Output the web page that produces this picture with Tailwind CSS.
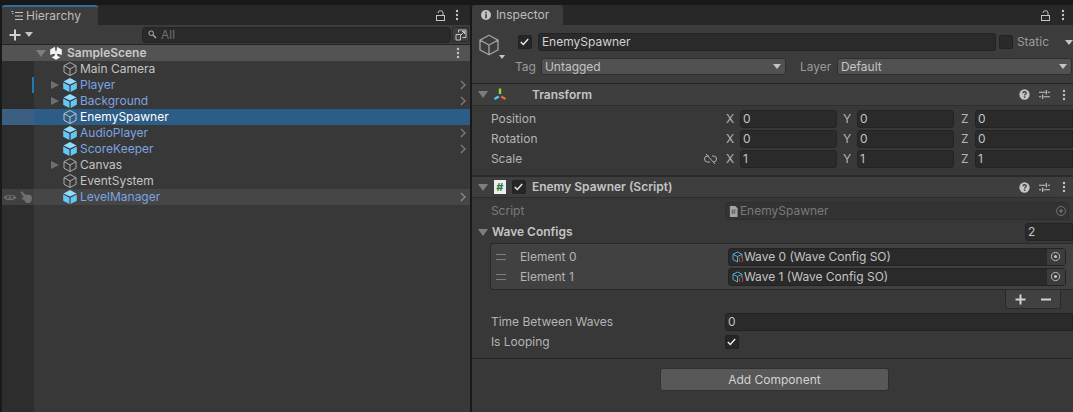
<!DOCTYPE html>
<html>
<head>
<meta charset="utf-8">
<script src="https://cdn.jsdelivr.net/npm/@tailwindcss/browser@4"></script>
</head>
<body class="w-[1073px] h-[412px] overflow-hidden bg-[#191919] font-['Inter','Noto_Sans',sans-serif] text-[12px] leading-none text-[#c4c4c4]">

<!-- shared icons -->
<svg class="hidden">
  <symbol id="cube" viewBox="0 0 16 16"><path d="M8 1.500 14 4.700V11.300L8 14.500 2 11.300V4.700ZM2 4.700 8 8 14 4.700M8 8V14.500" fill="none" stroke="currentColor" stroke-width=".9" stroke-linejoin="round"/></symbol>
  <symbol id="prefab" viewBox="0 0 16 16"><path d="M8 1 14.500 4.400 8 7.600 1.500 4.400Z" fill="#8fdcff"/><path d="M1.200 5.500 7.400 8.700V15L1.200 11.800Z" fill="#62c8f8"/><path d="M14.800 5.500 8.600 8.700V15L14.800 11.800Z" fill="#62c8f8"/></symbol>
  <symbol id="kebab" viewBox="0 0 4 12"><circle cx="2" cy="2" r="1.200" fill="currentColor"/><circle cx="2" cy="6" r="1.200" fill="currentColor"/><circle cx="2" cy="10" r="1.200" fill="currentColor"/></symbol>
  <symbol id="lock" viewBox="0 0 9 11"><path d="M2 3A2.500 2.200 0 0 1 7 2.800V5.500" fill="none" stroke="currentColor"/><rect x=".5" y="5.500" width="8" height="5" fill="none" stroke="currentColor"/></symbol>
  <symbol id="tune" viewBox="0 0 12 12"><path d="M0 3.500H7M9.500 3.500H12M0 8.500H2.500M5 8.500H12M8 1V6M4 6V11" fill="none" stroke="currentColor" stroke-width="1.200"/></symbol>
  <symbol id="help" viewBox="0 0 12 12"><circle cx="6" cy="6" r="5.600" fill="currentColor"/><path d="M4.200 4.700C4.300 3.500 5.100 3 6.100 3 7.100 3 7.900 3.700 7.900 4.600 7.900 5.800 6.100 5.700 6.100 7.100" fill="none" stroke="#3e3e3e" stroke-width="1.400"/><rect x="5.300" y="8" width="1.600" height="1.600" fill="#3e3e3e"/></symbol>
  <symbol id="picker" viewBox="0 0 12 12"><circle cx="6" cy="6" r="4.500" fill="none" stroke="currentColor"/><circle cx="6" cy="6" r="1.700" fill="currentColor"/></symbol>
  <symbol id="so" viewBox="0 0 12 12"><path d="M5.500 1 10 3.300V7M5.500 1 1 3.300V8.500L5.500 11M1 3.300 5.500 5.600 10 3.300M5.500 5.600V11" fill="none" stroke="#5fa8cf"/><path d="M8 6.800C7 7.500 7 10 8 10.800M10 6.800C11 7.500 11 10 10 10.800" fill="none" stroke="#d8552f"/></symbol>
  <symbol id="doc" viewBox="0 0 10 12"><path d="M1 0H7L9.500 2.500V12H1Z" fill="#a3a3a3"/><path d="M4 3.500 3.500 9M6.500 3.500 6 9M2.800 5.200H7.300M2.600 7.300H7.100" stroke="#4f6a4f" stroke-width=".9"/></symbol>
</svg>

<div class="flex h-full pt-[5px]">

  <!-- Hierarchy -->
  <section class="w-[470px] h-full pl-[2px] flex flex-col">
    <div class="h-[20px] flex bg-[#282828] shrink-0">
      <div class="w-[96px] h-full bg-[#3c3c3c] border-t-2 border-[#2d6ea3] flex items-center pl-[9px] gap-[3px] rounded-t-[3px]">
        <svg class="w-[12px] h-[10px] text-[#c4c4c4]" viewBox="0 0 12 10"><path d="M4 1.500H12M4 5H12M4 8.500H12" stroke="currentColor"/><path d="M0 .5H2.500M1 2.500H2.500" stroke="currentColor" stroke-width=".8"/></svg>
        <span class="text-[#bdbdbd]">Hierarchy</span>
      </div>
      <div class="ml-auto flex items-center gap-[10px] pr-[11px] text-[#c4c4c4]">
        <svg class="w-[9px] h-[11px]"><use href="#lock"/></svg>
        <svg class="w-[4px] h-[12px]"><use href="#kebab"/></svg>
      </div>
    </div>
    <div class="h-[20px] bg-[#3c3c3c] flex items-center shrink-0 border-b border-[#232323]">
      <svg class="ml-[7px] w-[12px] h-[12px] text-[#d2d2d2]" viewBox="0 0 12 12"><path d="M6 .5V11.500M.5 6H11.500" stroke="currentColor" stroke-width="2"/></svg>
      <div class="ml-[4px] w-0 h-0 border-x-[4px] border-x-transparent border-t-[5px] border-t-[#c4c4c4]"></div>
      <div class="ml-[109px] w-[309px] h-[16px] rounded-[4px] bg-[#2a2a2a] border border-[#242424] flex items-center pl-[5px] gap-[4px] text-[#6f6f6f]">
        <svg class="w-[9px] h-[9px] text-[#b0b0b0]" viewBox="0 0 9 9"><circle cx="3.200" cy="3.200" r="2.300" fill="none" stroke="currentColor"/><path d="M5 5 8 8" stroke="currentColor" stroke-width="1.200"/></svg>
        <span>All</span>
      </div>
      <div class="w-[17px] h-[15px] ml-[1px] bg-[#3f3f3f] border border-[#2a2a2a] rounded-[2px] flex items-center justify-center">
        <svg class="w-[12px] h-[12px] text-[#c4c4c4]" viewBox="0 0 12 12"><path d="M1 5.500H5.500V11H1ZM3.500 3.500V1H11V8.500H7.500M6 6 9.500 2.500M7 2.500H9.500V5" fill="none" stroke="currentColor"/></svg>
      </div>
    </div>

    <div class="flex-1 min-h-0 flex flex-col bg-[#383838]">
      <div class="h-[16px] bg-[#535353] flex items-center shrink-0 font-semibold text-[#c8c8c8]">
        <div class="ml-[34px] w-0 h-0 border-x-[5px] border-x-transparent border-t-[7px] border-t-[#7e7e7e]"></div>
        <svg class="ml-[3px] w-[14px] h-[14px] text-[#f4f4f4]" viewBox="0 0 14 14"><path d="M7 .3 12.800 3.600V10.400L7 13.700 1.200 10.400V3.600Z" fill="currentColor"/><path d="M5.800 0H8.200L7.600 4.400 7 6 6.400 4.400ZM0 10 2.200 8.600 5.200 7.800 6.200 8.500 5.300 10 1.200 12ZM14 10 11.800 8.600 8.800 7.800 7.800 8.500 8.700 10 12.800 12Z" fill="#535353"/></svg>
        <span class="ml-[4px]">SampleScene</span>
        <svg class="ml-auto mr-[10px] w-[4px] h-[12px] text-[#c4c4c4]"><use href="#kebab"/></svg>
      </div>
      <div class="flex-1 min-h-0 flex">
        <div class="w-[32px] bg-[#2d2d2d] flex flex-col shrink-0">
          <div class="h-[16px]"></div>
          <div class="h-[16px] flex justify-end"><div class="w-[2px] bg-[#1f78b4]"></div></div>
          <div class="h-[16px]"></div>
          <div class="h-[16px] bg-[#3a5f82]"></div>
          <div class="h-[64px]"></div>
          <div class="h-[16px] bg-[#404040] flex items-center pl-[1px] gap-[3px] text-[#707070]">
            <svg class="w-[14px] h-[9px]" viewBox="0 0 14 9"><path d="M.5 4.500C3 .8 11 .8 13.500 4.500 11 8.200 3 8.200 .5 4.500Z" fill="currentColor"/><ellipse cx="7" cy="4.200" rx="3.500" ry="1.600" fill="#404040"/><circle cx="7" cy="4.500" r="1.200" fill="currentColor"/></svg>
            <svg class="w-[12px] h-[12px]" viewBox="0 0 12 12"><path d="M.5 1 2 .3 5 3.500 10.500 4 12 6 11.500 10 9.500 12H6.500L4.500 9.500 1.500 7.500 2 6.500 4 7Z" fill="currentColor"/></svg>
          </div>
        </div>
        <div class="flex-1 flex flex-col">
          <div class="h-[16px] flex items-center pl-[28px]">
            <svg class="w-[16px] h-[16px] text-[#b8b8b8]"><use href="#cube"/></svg><span class="ml-[2px]">Main Camera</span>
          </div>
          <div class="h-[16px] flex items-center pl-[17px] text-[#7ba4e0]">
            <div class="w-0 h-0 border-y-[4px] border-y-transparent border-l-[8px] border-l-[#6f6f6f] mr-[3px]"></div>
            <svg class="w-[16px] h-[16px]"><use href="#prefab"/></svg><span class="ml-[2px]">Player</span>
            <svg class="ml-auto mr-[4px] w-[6px] h-[10px] text-[#7e7e7e]" viewBox="0 0 6 10"><path d="M1 1 5 5 1 9" fill="none" stroke="currentColor" stroke-width="1.200"/></svg>
          </div>
          <div class="h-[16px] flex items-center pl-[17px] text-[#7ba4e0]">
            <div class="w-0 h-0 border-y-[4px] border-y-transparent border-l-[8px] border-l-[#6f6f6f] mr-[3px]"></div>
            <svg class="w-[16px] h-[16px]"><use href="#prefab"/></svg><span class="ml-[2px]">Background</span>
            <svg class="ml-auto mr-[4px] w-[6px] h-[10px] text-[#7e7e7e]" viewBox="0 0 6 10"><path d="M1 1 5 5 1 9" fill="none" stroke="currentColor" stroke-width="1.200"/></svg>
          </div>
          <div class="h-[16px] flex items-center pl-[28px] bg-[#2c5d87] text-white">
            <svg class="w-[16px] h-[16px] text-[#d0d0d0]"><use href="#cube"/></svg><span class="ml-[2px]">EnemySpawner</span>
          </div>
          <div class="h-[16px] flex items-center pl-[28px] text-[#7ba4e0]">
            <svg class="w-[16px] h-[16px]"><use href="#prefab"/></svg><span class="ml-[2px]">AudioPlayer</span>
            <svg class="ml-auto mr-[4px] w-[6px] h-[10px] text-[#7e7e7e]" viewBox="0 0 6 10"><path d="M1 1 5 5 1 9" fill="none" stroke="currentColor" stroke-width="1.200"/></svg>
          </div>
          <div class="h-[16px] flex items-center pl-[28px] text-[#7ba4e0]">
            <svg class="w-[16px] h-[16px]"><use href="#prefab"/></svg><span class="ml-[2px]">ScoreKeeper</span>
            <svg class="ml-auto mr-[4px] w-[6px] h-[10px] text-[#7e7e7e]" viewBox="0 0 6 10"><path d="M1 1 5 5 1 9" fill="none" stroke="currentColor" stroke-width="1.200"/></svg>
          </div>
          <div class="h-[16px] flex items-center pl-[17px]">
            <div class="w-0 h-0 border-y-[4px] border-y-transparent border-l-[8px] border-l-[#6f6f6f] mr-[3px]"></div>
            <svg class="w-[16px] h-[16px] text-[#b8b8b8]"><use href="#cube"/></svg><span class="ml-[2px]">Canvas</span>
          </div>
          <div class="h-[16px] flex items-center pl-[28px]">
            <svg class="w-[16px] h-[16px] text-[#b8b8b8]"><use href="#cube"/></svg><span class="ml-[2px]">EventSystem</span>
          </div>
          <div class="h-[16px] flex items-center pl-[28px] bg-[#464646] text-[#7ba4e0]">
            <svg class="w-[16px] h-[16px]"><use href="#prefab"/></svg><span class="ml-[2px]">LevelManager</span>
            <svg class="ml-auto mr-[4px] w-[6px] h-[10px] text-[#8e8e8e]" viewBox="0 0 6 10"><path d="M1 1 5 5 1 9" fill="none" stroke="currentColor" stroke-width="1.200"/></svg>
          </div>
        </div>
      </div>
    </div>
  </section>

  <!-- Inspector -->
  <section class="ml-[2px] flex-1 h-full flex flex-col bg-[#383838]">
    <div class="h-[20px] flex bg-[#282828] shrink-0">
      <div class="w-[91px] h-full bg-[#3c3c3c] rounded-t-[3px] flex items-center pl-[9px] gap-[5px]">
        <svg class="w-[10px] h-[10px] text-[#c4c4c4]" viewBox="0 0 10 10"><circle cx="5" cy="5" r="5" fill="currentColor"/><rect x="4.200" y="1.800" width="1.600" height="1.600" fill="#3c3c3c"/><rect x="4.200" y="4.200" width="1.600" height="4" fill="#3c3c3c"/></svg>
        <span class="text-[#bdbdbd]">Inspector</span>
      </div>
      <div class="ml-auto flex items-center gap-[11px] pr-[8px]">
        <svg class="w-[9px] h-[11px]"><use href="#lock"/></svg>
        <svg class="w-[4px] h-[12px]"><use href="#kebab"/></svg>
      </div>
    </div>

    <!-- object header -->
    <div class="h-[59px] bg-[#3c3c3c] border-b border-[#232323] shrink-0 flex">
      <div class="relative w-[46px] shrink-0">
        <svg class="absolute left-[5px] top-[8px] w-[24px] h-[24px] text-[#a0a0a0]"><use href="#cube"/></svg>
        <div class="absolute left-[27px] top-[30px] w-0 h-0 border-x-[3px] border-x-transparent border-t-[4px] border-t-[#c4c4c4]"></div>
      </div>
      <div class="flex-1 min-w-0 flex flex-col">
        <div class="h-[18px] mt-[8px] flex items-center">
          <div class="w-[14px] h-[14px] bg-[#262626] border border-[#222] rounded-[2px] flex items-center justify-center">
            <svg class="w-[9px] h-[8px] text-[#ececec]" viewBox="0 0 9 8"><path d="M.8 4 3.300 6.500 8.200 1" fill="none" stroke="currentColor" stroke-width="1.400"/></svg>
          </div>
          <div class="ml-[6px] w-[458px] h-[18px] rounded-[3px] bg-[#2a2a2a] border border-[#232323] pl-[3px] flex items-center text-[#d2d2d2]">EnemySpawner</div>
          <div class="ml-[3px] w-[14px] h-[14px] bg-[#2a2a2a] border border-[#232323] rounded-[2px]"></div>
          <span class="ml-[4px] text-[#9a9a9a]">Static</span>
          <div class="ml-[16px] w-0 h-0 border-x-[4px] border-x-transparent border-t-[5px] border-t-[#c4c4c4]"></div>
        </div>
        <div class="h-[17px] mt-[7px] flex items-center">
          <span class="w-[22px] -ml-[3px] mr-[4px] text-[#9a9a9a]">Tag</span>
          <div class="w-[245px] h-[17px] rounded-[3px] bg-[#515151] border border-[#2f2f2f] pl-[3px] pr-[4px] flex items-center justify-between">
            <span>Untagged</span>
            <div class="w-0 h-0 border-x-[4px] border-x-transparent border-t-[5px] border-t-[#c4c4c4]"></div>
          </div>
          <span class="ml-[14px] w-[37px] text-[#9a9a9a]">Layer</span>
          <div class="w-[235px] h-[17px] rounded-[3px] bg-[#515151] border border-[#2f2f2f] pl-[3px] pr-[4px] flex items-center justify-between">
            <span>Default</span>
            <div class="w-0 h-0 border-x-[4px] border-x-transparent border-t-[5px] border-t-[#c4c4c4]"></div>
          </div>
        </div>
      </div>
    </div>

    <!-- Transform -->
    <div class="h-[22px] bg-[#3e3e3e] border-b border-[#2e2e2e] flex items-center shrink-0 font-semibold">
      <div class="ml-[6px] w-0 h-0 border-x-[5px] border-x-transparent border-t-[7px] border-t-[#7e7e7e]"></div>
      <svg class="ml-[5px] w-[14px] h-[14px]" viewBox="0 0 14 14"><path d="M7 .5V6" stroke="#8fdc3c" stroke-width="2.400"/><path d="M5.800 8.500 1.500 11" stroke="#58c0f0" stroke-width="2.600"/><path d="M8.200 8.500 12.500 11" stroke="#e8643c" stroke-width="2.600"/></svg>
      <span class="ml-[25px]">Transform</span>
      <svg class="ml-auto w-[11px] h-[11px] text-[#c4c4c4]"><use href="#help"/></svg>
      <svg class="ml-[9px] w-[11px] h-[11px] text-[#c4c4c4]"><use href="#tune"/></svg>
      <svg class="ml-[12px] mr-[7px] w-[4px] h-[12px] text-[#c4c4c4]"><use href="#kebab"/></svg>
    </div>
    <div class="h-[71px] border-b-2 border-[#2a2a2a] pt-[3px] shrink-0 flex flex-col">
      <div class="h-[20px] flex items-center pl-[19px]">
        <span class="flex-1 text-[#b4b4b4]">Position</span>
        <span class="w-[14px] text-[#b4b4b4]">X</span><div class="w-[97px] h-[18px] bg-[#2a2a2a] border border-[#232323] rounded-[3px] pl-[2px] flex items-center">0</div>
        <span class="ml-[6px] w-[14px] text-[#b4b4b4]">Y</span><div class="w-[97px] h-[18px] bg-[#2a2a2a] border border-[#232323] rounded-[3px] pl-[2px] flex items-center">0</div>
        <span class="ml-[7px] w-[14px] text-[#b4b4b4]">Z</span><div class="w-[98px] h-[18px] bg-[#2a2a2a] border border-[#232323] rounded-l-[3px] pl-[2px] flex items-center">0</div>
      </div>
      <div class="h-[20px] flex items-center pl-[19px]">
        <span class="flex-1 text-[#b4b4b4]">Rotation</span>
        <span class="w-[14px] text-[#b4b4b4]">X</span><div class="w-[97px] h-[18px] bg-[#2a2a2a] border border-[#232323] rounded-[3px] pl-[2px] flex items-center">0</div>
        <span class="ml-[6px] w-[14px] text-[#b4b4b4]">Y</span><div class="w-[97px] h-[18px] bg-[#2a2a2a] border border-[#232323] rounded-[3px] pl-[2px] flex items-center">0</div>
        <span class="ml-[7px] w-[14px] text-[#b4b4b4]">Z</span><div class="w-[98px] h-[18px] bg-[#2a2a2a] border border-[#232323] rounded-l-[3px] pl-[2px] flex items-center">0</div>
      </div>
      <div class="h-[20px] flex items-center pl-[19px]">
        <span class="flex-1 text-[#b4b4b4]">Scale</span>
        <svg class="w-[13px] h-[12px] mr-[9px] text-[#b0b0b0]" viewBox="0 0 13 12"><path d="M5 3H3.500a3 3 0 0 0 0 6H6M8 3H9.500a3 3 0 0 1 0 6H9M2 1 11 11" fill="none" stroke="currentColor"/></svg>
        <span class="w-[14px] text-[#b4b4b4]">X</span><div class="w-[97px] h-[18px] bg-[#2a2a2a] border border-[#232323] rounded-[3px] pl-[2px] flex items-center">1</div>
        <span class="ml-[6px] w-[14px] text-[#b4b4b4]">Y</span><div class="w-[97px] h-[18px] bg-[#2a2a2a] border border-[#232323] rounded-[3px] pl-[2px] flex items-center">1</div>
        <span class="ml-[7px] w-[14px] text-[#b4b4b4]">Z</span><div class="w-[98px] h-[18px] bg-[#2a2a2a] border border-[#232323] rounded-l-[3px] pl-[2px] flex items-center">1</div>
      </div>
    </div>

    <!-- Enemy Spawner script -->
    <div class="h-[21px] bg-[#3e3e3e] border-b border-[#2e2e2e] flex items-center shrink-0 font-semibold">
      <div class="ml-[6px] w-0 h-0 border-x-[5px] border-x-transparent border-t-[7px] border-t-[#7e7e7e]"></div>
      <div class="ml-[6px] w-[12px] h-[14px] bg-[#eeeeee] flex items-center justify-center text-[11px] font-bold text-[#1e7a3c]">#</div>
      <div class="ml-[6px] w-[14px] h-[14px] bg-[#262626] border border-[#222] rounded-[2px] flex items-center justify-center">
        <svg class="w-[9px] h-[8px] text-[#ececec]" viewBox="0 0 9 8"><path d="M.8 4 3.300 6.500 8.200 1" fill="none" stroke="currentColor" stroke-width="1.400"/></svg>
      </div>
      <span class="ml-[6px]">Enemy Spawner (Script)</span>
      <svg class="ml-auto w-[11px] h-[11px] text-[#c4c4c4]"><use href="#help"/></svg>
      <svg class="ml-[9px] w-[11px] h-[11px] text-[#c4c4c4]"><use href="#tune"/></svg>
      <svg class="ml-[12px] mr-[7px] w-[4px] h-[12px] text-[#c4c4c4]"><use href="#kebab"/></svg>
    </div>
    <div class="flex-1 min-h-0 flex flex-col">
      <div class="h-[18px] mt-[4px] flex items-center pl-[19px] shrink-0">
        <span class="w-[234px] text-[#7a7a7a]">Script</span>
        <div class="w-[344px] h-[18px] bg-[#333333] border border-[#2e2e2e] rounded-[3px] pl-[3px] flex items-center text-[#7a7a7a]">
          <svg class="w-[9px] h-[11px] mr-[2px]"><use href="#doc"/></svg>EnemySpawner
          <svg class="ml-auto mr-[1px] w-[12px] h-[12px] text-[#6f6f6f]"><use href="#picker"/></svg>
        </div>
      </div>
      <div class="h-[18px] mt-[3px] flex items-center pl-[6px] font-semibold shrink-0">
        <div class="w-0 h-0 border-x-[5px] border-x-transparent border-t-[7px] border-t-[#7e7e7e]"></div>
        <span class="ml-[4px] text-[#c4c4c4]">Wave Configs</span>
        <div class="ml-auto w-[48px] h-[18px] bg-[#2a2a2a] border border-[#232323] rounded-l-[3px] pl-[2px] flex items-center font-normal">2</div>
      </div>
      <div class="ml-[18px] mt-[2px] h-[47px] bg-[#414141] border border-[#2a2a2a] border-r-0 rounded-l-[3px] flex flex-col justify-center gap-[2px] shrink-0">
        <div class="h-[18px] flex items-center">
          <svg class="ml-[5px] w-[10px] h-[6px] text-[#7e7e7e]" viewBox="0 0 10 6"><path d="M0 .5H10M0 5.500H10" stroke="currentColor"/></svg>
          <span class="ml-[14px] w-[208px] text-[#b4b4b4]">Element 0</span>
          <div class="w-[338px] h-[18px] bg-[#2a2a2a] border border-[#232323] rounded-[3px] pl-[3px] flex items-center">
            <svg class="w-[12px] h-[12px] shrink-0"><use href="#so"/></svg>Wave 0 (Wave Config SO)
            <div class="ml-auto w-[18px] h-full bg-[#3c3c3c] flex items-center justify-center text-[#c4c4c4]"><svg class="w-[11px] h-[11px]"><use href="#picker"/></svg></div>
          </div>
        </div>
        <div class="h-[18px] flex items-center">
          <svg class="ml-[5px] w-[10px] h-[6px] text-[#7e7e7e]" viewBox="0 0 10 6"><path d="M0 .5H10M0 5.500H10" stroke="currentColor"/></svg>
          <span class="ml-[14px] w-[208px] text-[#b4b4b4]">Element 1</span>
          <div class="w-[338px] h-[18px] bg-[#2a2a2a] border border-[#232323] rounded-[3px] pl-[3px] flex items-center">
            <svg class="w-[12px] h-[12px] shrink-0"><use href="#so"/></svg>Wave 1 (Wave Config SO)
            <div class="ml-auto w-[18px] h-full bg-[#3c3c3c] flex items-center justify-center text-[#c4c4c4]"><svg class="w-[11px] h-[11px]"><use href="#picker"/></svg></div>
          </div>
        </div>
      </div>
      <div class="ml-[534px] w-[56px] h-[19px] bg-[#414141] border border-t-0 border-[#2a2a2a] rounded-b-[3px] flex items-center justify-center gap-[15px] shrink-0 -translate-x-[1px]">
        <svg class="w-[11px] h-[11px] text-[#d2d2d2]" viewBox="0 0 11 11"><path d="M5.500 .5V10.500M.5 5.500H10.500" stroke="currentColor" stroke-width="2"/></svg>
        <svg class="w-[10px] h-[11px] text-[#d2d2d2]" viewBox="0 0 10 11"><path d="M0 5.500H10" stroke="currentColor" stroke-width="2"/></svg>
      </div>
      <div class="h-[18px] mt-[4px] flex items-center pl-[19px] shrink-0">
        <span class="w-[234px] text-[#b4b4b4]">Time Between Waves</span>
        <div class="flex-1 h-[18px] bg-[#2a2a2a] border border-[#232323] rounded-l-[3px] pl-[2px] flex items-center">0</div>
      </div>
      <div class="h-[16px] mt-[3px] flex items-center pl-[19px] shrink-0">
        <span class="w-[234px] text-[#b4b4b4]">Is Looping</span>
        <div class="w-[14px] h-[14px] bg-[#262626] border border-[#222] rounded-[2px] flex items-center justify-center">
          <svg class="w-[9px] h-[8px] text-[#ececec]" viewBox="0 0 9 8"><path d="M.8 4 3.300 6.500 8.200 1" fill="none" stroke="currentColor" stroke-width="1.400"/></svg>
        </div>
      </div>
      <div class="mt-[8px] border-t border-[#262626] flex-1 flex justify-center pt-[9px] pl-[4px]">
        <div class="w-[229px] h-[23px] bg-[#585858] border border-[#303030] rounded-[3px] flex items-center justify-center text-[#d2d2d2]">Add Component</div>
      </div>
    </div>
  </section>
</div>
</body>
</html>
